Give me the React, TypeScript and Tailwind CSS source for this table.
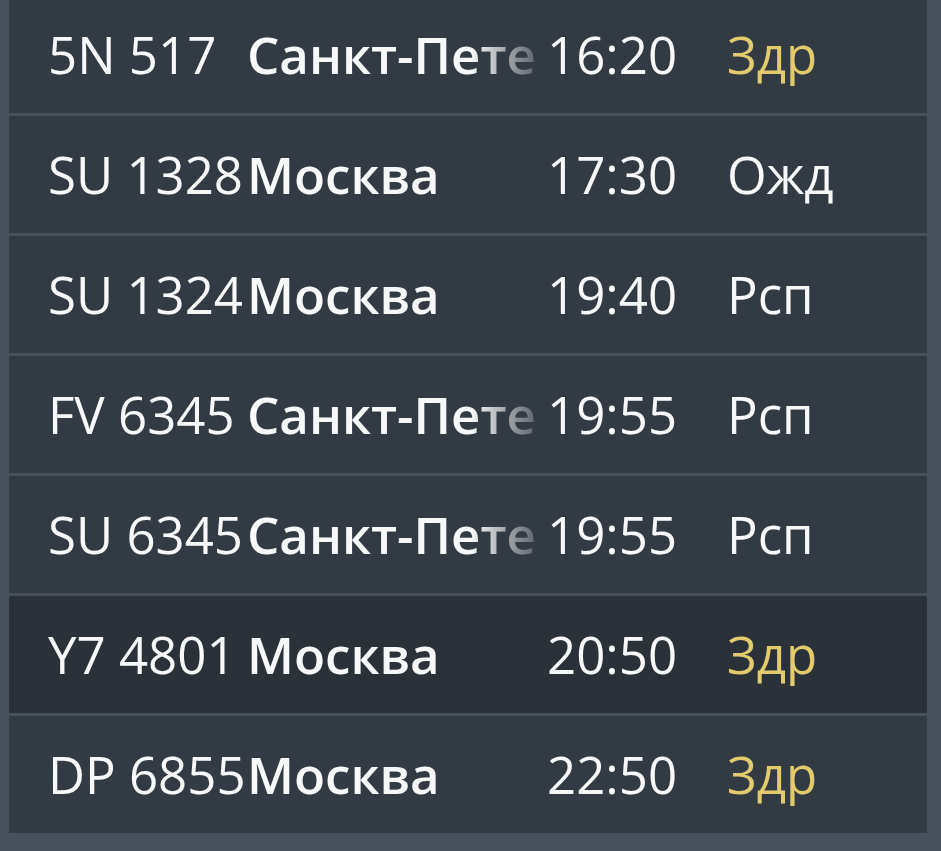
import React from "react"

type Flight = {
  code: string
  city: string
  time: string
  status: string
  late?: boolean
  active?: boolean
}

const flights: Flight[] = [
  { code: "5N 517", city: "Санкт-Петербург", time: "16:20", status: "Здр", late: true },
  { code: "SU 1328", city: "Москва", time: "17:30", status: "Ожд" },
  { code: "SU 1324", city: "Москва", time: "19:40", status: "Рсп" },
  { code: "FV 6345", city: "Санкт-Петербург", time: "19:55", status: "Рсп" },
  { code: "SU 6345", city: "Санкт-Петербург", time: "19:55", status: "Рсп" },
  { code: "Y7 4801", city: "Москва", time: "20:50", status: "Здр", late: true, active: true },
  { code: "DP 6855", city: "Москва", time: "22:50", status: "Здр", late: true },
]

// строка табло
function FlightRow({ f }: { f: Flight }) {
  return (
    <div
      className={`flex items-center h-[117px] pl-[39px] text-[51px] leading-none text-[#f7f8f8] ${
        f.active ? "bg-[#2b3139]" : "bg-[#323a44]"
      }`}
    >
      <div className="w-[199px] shrink-0 whitespace-nowrap">{f.code}</div>
      <div className="w-[287px] shrink-0 overflow-hidden whitespace-nowrap font-semibold [mask-image:linear-gradient(to_right,black_78%,rgba(0,0,0,0.25))]">
        {f.city}
      </div>
      <div className="w-[193px] shrink-0 pl-[13px] whitespace-nowrap">{f.time}</div>
      <div className={`whitespace-nowrap ${f.late ? "text-[#e3ca6c]" : ""}`}>{f.status}</div>
    </div>
  )
}

export default function App() {
  return (
    <div
      className="w-[941px] h-[851px] overflow-hidden bg-[#46515d] pl-[9px] pr-[14px]"
      style={{ fontFamily: '"Open Sans", "Noto Sans", sans-serif' }}
    >
      <div className="-mt-[4px] flex flex-col gap-[3px]">
        {flights.map((f, i) => (
          <FlightRow key={i} f={f} />
        ))}
      </div>
    </div>
  )
}
